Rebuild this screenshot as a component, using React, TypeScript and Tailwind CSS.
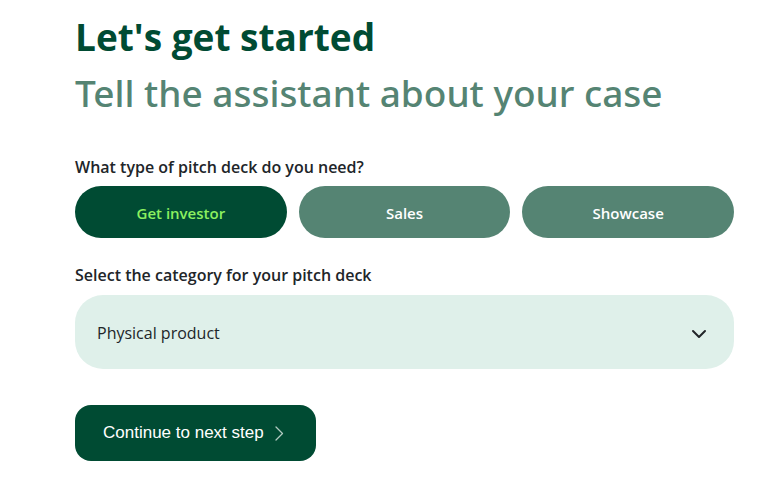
import { useState } from "react";

const deckTypes = ["Get investor", "Sales", "Showcase"];

export default function App() {
  const [deckType, setDeckType] = useState("Get investor");

  return (
    <main className="min-h-screen bg-white pt-[9px] pr-[38px] pb-8 pl-[75px] font-['Open_Sans','Noto_Sans',sans-serif] text-[#212529]">
      <h1 className="text-[37px] leading-[56px] font-bold whitespace-nowrap text-[#004b33]">
        Let's get started
        <span className="block font-['Noto_Sans','Open_Sans',sans-serif] font-medium text-[#558473]">
          Tell the assistant about your case
        </span>
      </h1>

      <form className="mt-[31px]" onSubmit={(event) => event.preventDefault()}>
        <fieldset>
          <legend className="pb-1 text-base leading-[30px] font-semibold">
            What type of pitch deck do you need?
          </legend>
          <div className="grid grid-cols-3 gap-3">
            {deckTypes.map((type) => (
              <button
                key={type}
                type="button"
                aria-pressed={type === deckType}
                onClick={() => setDeckType(type)}
                className={
                  type === deckType
                    ? "h-[52px] rounded-full bg-[#004b33] pt-0.5 text-[15px] font-semibold text-[#8cf060]"
                    : "h-[52px] rounded-full bg-[#558473] pt-0.5 text-[15px] font-semibold text-white"
                }
              >
                {type}
              </button>
            ))}
          </div>
        </fieldset>

        <label
          htmlFor="category"
          className="mt-[22px] block pb-[5px] text-base leading-[30px] font-semibold"
        >
          Select the category for your pitch deck
        </label>
        <div className="grid items-center">
          <select
            id="category"
            className="col-start-1 row-start-1 h-[74px] w-full appearance-none rounded-[28px] bg-[#dff0ea] px-[22px] pt-0.5 text-base"
          >
            <option>Physical product</option>
          </select>
          <svg
            viewBox="0 0 16 16"
            aria-hidden="true"
            className="pointer-events-none col-start-1 row-start-1 mt-1 mr-[27px] size-4 justify-self-end fill-none stroke-current stroke-2"
          >
            <path d="m2 5 6 6 6-6" strokeLinecap="round" strokeLinejoin="round" />
          </svg>
        </div>

        <button
          type="submit"
          className="mt-9 flex h-14 items-center gap-2 rounded-2xl bg-[#004b33] px-7 font-['Liberation_Sans',Arial,sans-serif] text-[17px] text-white"
        >
          Continue to next step
          <svg
            viewBox="0 0 16 16"
            aria-hidden="true"
            className="size-4 fill-none stroke-[#b2cac1]"
          >
            <path d="m4 2 6.5 6.5L4 15" strokeWidth="1.3" strokeLinecap="round" strokeLinejoin="round" />
          </svg>
        </button>
      </form>
    </main>
  );
}
